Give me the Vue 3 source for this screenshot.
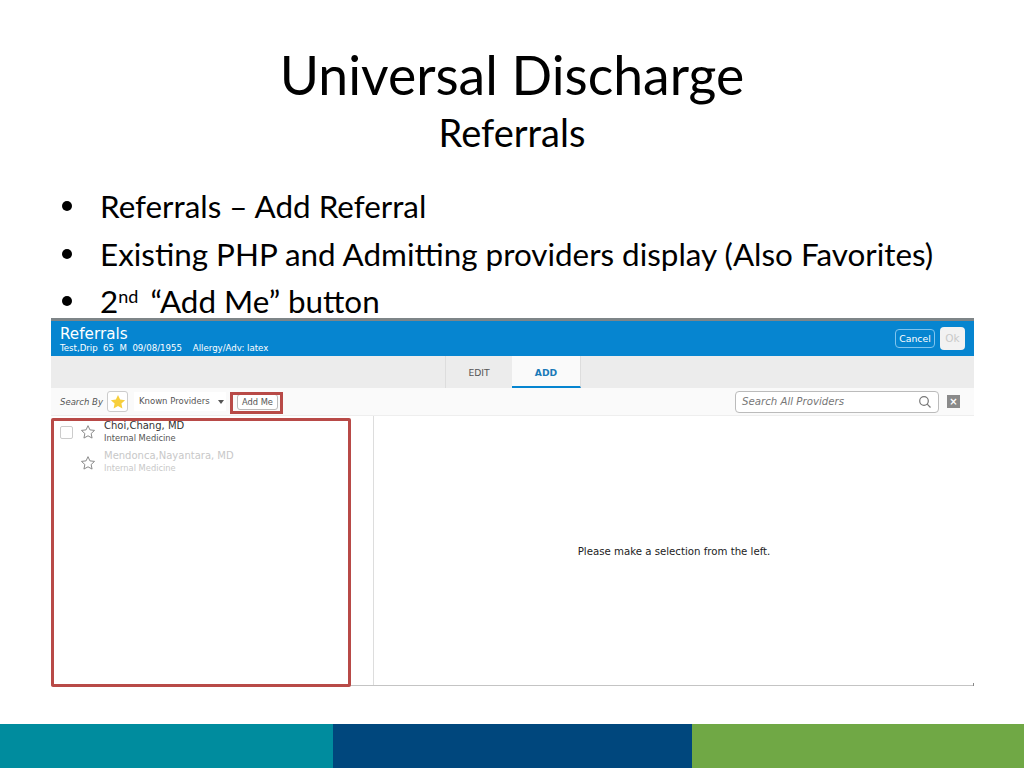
<script setup>
const bullets = [
  { id: 1, text: 'Referrals – Add Referral' },
  { id: 2, text: 'Existing PHP and Admitting providers display (Also Favorites)' },
]
const providers = [
  { name: 'Choi,Chang, MD', spec: 'Internal Medicine', check: true, muted: false },
  { name: 'Mendonca,Nayantara, MD', spec: 'Internal Medicine', check: false, muted: true },
]
</script>

<template>
  <div class="slide">
    <header class="head">
      <h1>Universal Discharge</h1>
      <h2>Referrals</h2>
    </header>
    <ul class="bullets">
      <li v-for="b in bullets" :key="b.id">{{ b.text }}</li>
      <li>2<sup>nd</sup> “Add Me” button</li>
    </ul>

    <section class="shot">
      <div class="topline"></div>
      <div class="blue">
        <div class="patient">
          <div class="ttl">Referrals</div>
          <div class="sub">Test,Drip&nbsp; 65&nbsp; M&nbsp; 09/08/1955 &nbsp;&nbsp; Allergy/Adv: latex</div>
        </div>
        <div class="actions">
          <span class="cancel">Cancel</span>
          <span class="ok">Ok</span>
        </div>
      </div>
      <div class="tabs">
        <span class="tab">EDIT</span>
        <span class="tab active">ADD</span>
      </div>
      <div class="tools">
        <em class="by">Search By</em>
        <span class="fav">
          <svg width="16" height="16" viewBox="0 0 24 24"><path d="M12 1.5l3.2 6.9 7.5.9-5.6 5.1 1.5 7.4L12 18.1l-6.6 3.7 1.5-7.4L1.300 9.300l7.500-.9z" fill="#f7cf3c"/></svg>
        </span>
        <span class="select">Known Providers<i class="caret"></i></span>
        <span class="addme">Add Me</span>
        <span class="search">
          <em>Search All Providers</em>
          <svg width="14" height="14" viewBox="0 0 14 14" fill="none" stroke="#777" stroke-width="1.200"><circle cx="6" cy="6" r="4.300"/><path d="M9.200 9.200L12.500 12.500"/></svg>
        </span>
        <span class="clear">×</span>
      </div>
      <div class="main">
        <div class="list">
          <div v-for="p in providers" :key="p.name" class="row" :class="{ muted: p.muted }">
            <span class="box" :class="{ none: !p.check }"></span>
            <svg class="star" width="16" height="16" viewBox="0 0 24 24" fill="none" stroke="#8b8b8b" stroke-width="1.500"><path d="M12 2.500l2.900 6.300 6.900.8-5.100 4.700 1.400 6.800L12 17.700l-6.100 3.400 1.400-6.800-5.100-4.700 6.900-.8z"/></svg>
            <div class="who">
              <div class="name">{{ p.name }}</div>
              <div class="spec">{{ p.spec }}</div>
            </div>
          </div>
        </div>
        <div class="detail">Please make a selection from the left.</div>
      </div>
      <i class="tick"></i>
      <div class="mark mark-add"></div>
      <div class="mark mark-list"></div>
    </section>

    <footer class="bands">
      <div class="teal"></div>
      <div class="navy"></div>
      <div class="green"></div>
    </footer>
  </div>
</template>

<style>
html, body { margin: 0; background: #fff; }
</style>

<style scoped>
.slide {
  width: 1024px;
  height: 768px;
  position: relative;
  overflow: hidden;
  display: flex;
  flex-direction: column;
  background: #fff;
  font-family: Lato, "Liberation Sans", sans-serif;
  color: #000;
}
.head { text-align: center; padding-top: 43px; }
h1 { margin: 0; font-size: 53.500px; line-height: 62px; font-weight: 400; }
h2 { margin: 6px 0 0; font-size: 38px; line-height: 42px; font-weight: 400; }
.bullets {
  list-style: none;
  margin: 30px 0 0;
  padding: 0 0 0 100px;
  font-size: 31.400px;
  line-height: 47.500px;
  height: 137px;
}
.bullets li { position: relative; white-space: nowrap; height: 47.500px; }
.bullets li::before {
  content: "";
  position: absolute;
  left: -38px;
  top: 18px;
  width: 10px;
  height: 10px;
  border-radius: 50%;
  background: #000;
}
sup { font-size: 18px; line-height: 0; vertical-align: 10px; margin-right: 4px; }

.shot {
  position: absolute;
  left: 51px;
  top: 318px;
  width: 923px;
  height: 368px;
  display: flex;
  flex-direction: column;
  font-family: "DejaVu Sans", sans-serif;
  background: #fff;
}
.topline { height: 3px; background: #7e8588; flex: none; }
.blue {
  height: 35px;
  flex: none;
  background: #0685d0;
  color: #fff;
  display: flex;
  justify-content: space-between;
  align-items: center;
  padding: 0 9px;
}
.patient { padding-top: 1px; }
.ttl { font-size: 15.200px; line-height: 18px; }
.sub { font-size: 8.600px; line-height: 11px; white-space: nowrap; }
.actions { display: flex; align-items: center; gap: 5px; }
.cancel {
  width: 38px;
  height: 17px;
  border: 1px solid #7fc4ee;
  border-radius: 4px;
  font-size: 9.300px;
  line-height: 17px;
  text-align: center;
}
.ok {
  width: 25px;
  height: 23px;
  border-radius: 4px;
  background: #f2f2f2;
  color: #c9c9c9;
  font-size: 10.500px;
  line-height: 23px;
  text-align: center;
}
.tabs {
  height: 32px;
  flex: none;
  background: #ececec;
  display: flex;
  padding-left: 394px;
}
.tab {
  width: 67px;
  box-sizing: border-box;
  font-size: 9.200px;
  line-height: 33px;
  text-align: center;
  color: #555;
  border-left: 1px solid #ddd;
}
.tab.active {
  width: 69px;
  background: #fafafa;
  color: #1a7ab8;
  font-weight: 700;
  border-bottom: 2px solid #0685d0;
  border-right: 1px solid #ddd;
  border-left: 0;
}
.tools {
  height: 28px;
  flex: none;
  box-sizing: border-box;
  background: #fafafa;
  border-bottom: 1px solid #eee;
  display: flex;
  align-items: center;
  padding-left: 9px;
  font-size: 8.500px;
  color: #555;
}
.by { width: 47px; }
.fav {
  width: 21px;
  height: 21px;
  box-sizing: border-box;
  border: 1px solid #ccc;
  border-radius: 3px;
  background: #fff;
  display: flex;
  align-items: center;
  justify-content: center;
}
.select {
  width: 92px;
  margin-left: 6px;
  height: 19px;
  line-height: 19px;
  padding-left: 5px;
  box-sizing: border-box;
  background: #fff;
  position: relative;
}
.caret {
  position: absolute;
  right: 2px;
  top: 8px;
  border: 3px solid transparent;
  border-top: 4px solid #555;
  border-bottom: 0;
}
.addme {
  margin-left: 11px;
  width: 41px;
  height: 16px;
  line-height: 15px;
  box-sizing: border-box;
  text-align: center;
  border: 1px solid #bbb;
  border-radius: 3px;
  background: #fff;
  font-size: 8.300px;
}
.search {
  margin-left: auto;
  width: 204px;
  height: 22px;
  box-sizing: border-box;
  border: 1px solid #bbb;
  border-radius: 4px;
  background: #fff;
  display: flex;
  align-items: center;
  justify-content: space-between;
  padding: 0 6px;
  font-size: 10.200px;
  color: #777;
}
.clear {
  width: 13px;
  height: 13px;
  margin: 0 14px 0 8px;
  background: #8a8a8a;
  color: #fff;
  font-size: 10px;
  line-height: 13px;
  text-align: center;
  font-weight: 700;
}
.main { flex: 1; display: flex; border-bottom: 1px solid #c4c4c4; min-height: 0; }
.list {
  width: 323px;
  flex: none;
  box-sizing: border-box;
  border-right: 1px solid #ddd;
  padding: 1px 0 0 9px;
}
.row { display: flex; align-items: center; height: 30.500px; }
.box {
  width: 13px;
  height: 13px;
  box-sizing: border-box;
  border: 1px solid #ccc;
  border-radius: 2px;
  margin-right: 7px;
  background: #fff;
}
.box.none { visibility: hidden; }
.star { margin-right: 8px; }
.who { padding-bottom: 1px; }
.name { font-size: 10px; line-height: 13px; color: #333; white-space: nowrap; }
.spec { font-size: 8.300px; line-height: 13px; color: #555; white-space: nowrap; }
.muted .name, .muted .spec { color: #c8c8c8; }
.detail {
  flex: 1;
  display: flex;
  align-items: center;
  justify-content: center;
  padding-top: 2px;
  font-size: 10.200px;
  color: #222;
}
.tick { position: absolute; right: 0; bottom: 0; width: 1px; height: 3px; background: #888; }
.mark { position: absolute; box-sizing: border-box; border: 3px solid #b84a47; }
.mark-add { left: 179px; top: 74px; width: 53px; height: 22px; }
.mark-list { left: 0; top: 100px; width: 300px; height: 269px; border-radius: 2px; }

.bands { position: absolute; left: 0; right: 0; top: 724px; height: 44px; display: flex; }
.teal { width: 333px; background: #008c9e; }
.navy { width: 359px; background: #00477d; }
.green { flex: 1; background: #70a845; }
</style>
